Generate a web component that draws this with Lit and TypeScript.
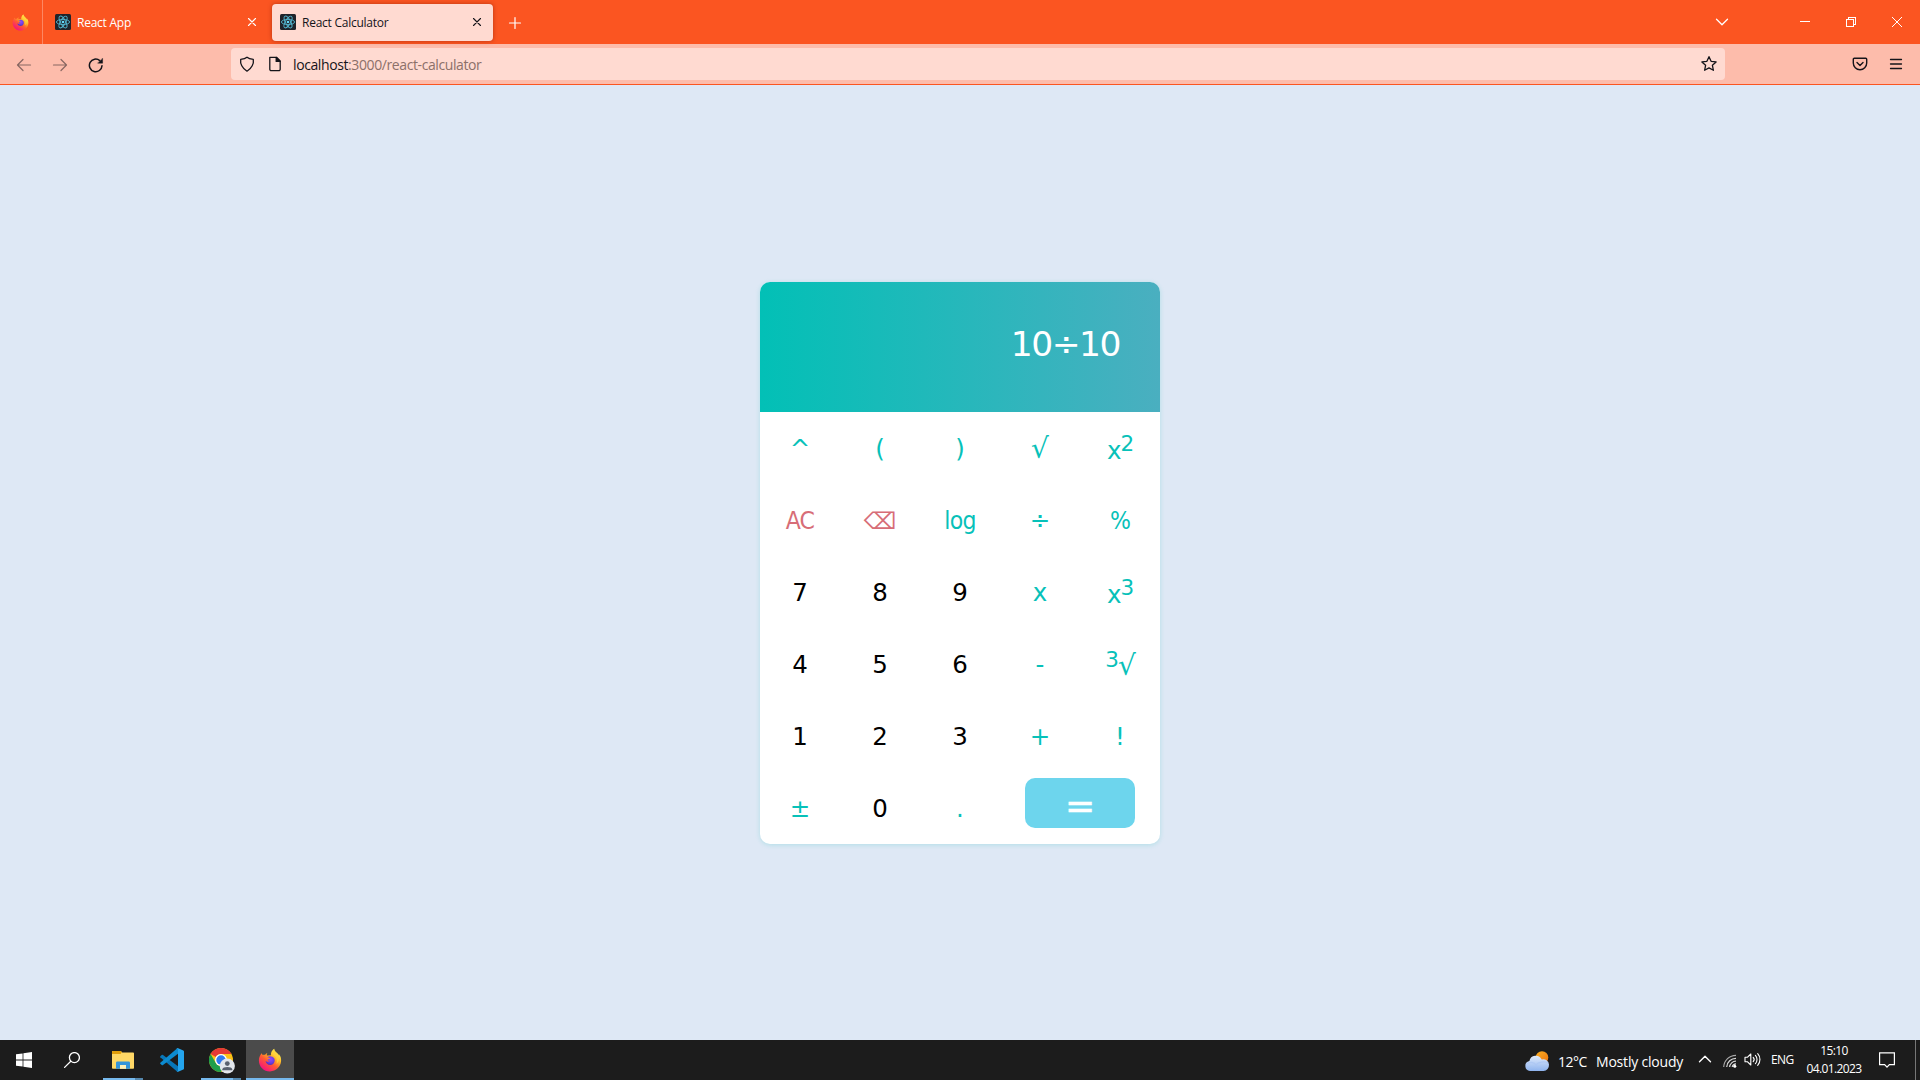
import { LitElement, html, svg, css } from "lit";
import { customElement, property } from "lit/decorators.js";
import { classMap } from "lit/directives/class-map.js";

const firefoxLogo = (id: string, size: number) => html`
  <svg width=${size} height=${size} viewBox="0 0 24 24">
    <defs>
      <linearGradient id="${id}-a" x1="0.85" y1="0.1" x2="0.25" y2="0.95">
        <stop offset="0.05" stop-color="#fff44f" />
        <stop offset="0.35" stop-color="#ffb025" />
        <stop offset="0.6" stop-color="#ff5a33" />
        <stop offset="1" stop-color="#f5127e" />
      </linearGradient>
      <radialGradient id="${id}-b" cx="0.55" cy="0.35" r="0.7">
        <stop offset="0" stop-color="#8c4bff" />
        <stop offset="0.6" stop-color="#6a3be0" />
        <stop offset="1" stop-color="#4b2fb0" />
      </radialGradient>
    </defs>
    <path fill="url(#${id}-a)" d="M2.4 6.9C3.1 5.8 3.9 5.3 3.9 5.3C4 6 4.3 6.6 4.7 7C5.3 6.7 6.4 6.6 7.1 6.8C7.9 5.6 9.3 5 9.3 5C8.8 5.8 8.7 6.7 8.9 7.5L13 7.2C12.6 4.6 14.1 1.9 16.2.7C16.2 3.6 19 4.3 20.4 6.6C20.8 6.9 21 7.5 21.1 8C21.2 7.2 21.1 6.7 21 6.3C22.6 8 23.3 10.6 23.1 13.1C22.7 19 18 23.4 12 23.4C5.700 23.4.9 18.500.9 12.400C.9 10.200 1.500 8.300 2.400 6.900Z" />
    <path fill="url(#${id}-b)" d="M9.300 9.200C11 7.500 14.800 7.900 16.200 10.300C17.600 13 15.900 16.900 12.600 17C9.800 17.100 7.700 15.200 7.600 13C8.900 14.100 10.800 14 12.300 12.800C11.500 12.900 10.200 12.600 9.600 11.900C10.200 11 11.600 11 12.100 10.600C11.600 9.700 10.300 9.600 9.300 9.200Z" />
    <path fill="#ffd23d" opacity=".75" d="M16.200.7C16.200 3.600 19 4.300 20.400 6.600C22 10 21 14 18.500 16C19.500 12 18.500 9 16 7.500C14 6.400 13.800 3 16.200.7Z" />
  </svg>`;

const reactLogo = html`
  <svg width="16" height="16" viewBox="0 0 16 16">
    <rect width="16" height="16" rx="1.500" fill="#20232a" />
    <g fill="none" stroke="#53b6cf" stroke-width=".9">
      <ellipse cx="8" cy="8" rx="6.600" ry="2.600" />
      <ellipse cx="8" cy="8" rx="6.600" ry="2.600" transform="rotate(60 8 8)" />
      <ellipse cx="8" cy="8" rx="6.600" ry="2.600" transform="rotate(120 8 8)" />
    </g>
    <circle cx="8" cy="8" r="1.300" fill="#61dafb" />
  </svg>`;

const line = (size: number, body: unknown, width = 1.2) => html`
  <svg width=${size} height=${size} viewBox="0 0 ${size} ${size}" fill="none" stroke="currentColor"
    stroke-width=${width} stroke-linecap="round" stroke-linejoin="round">${body}</svg>`;

const icons = {
  close: line(16, svg`<path d="M4.500 4.500l7 7M11.500 4.500l-7 7" />`, 1.1),
  plus: line(16, svg`<path d="M8 2.500v11M2.500 8h11" />`, 1.2),
  back: line(16, svg`<path d="M14.500 8H1.800M7 2.500L1.500 8L7 13.500" />`, 1.2),
  forward: line(16, svg`<path d="M1.500 8h12.700M9 2.500L14.500 8L9 13.500" />`, 1.2),
  reload: line(16, svg`<path d="M14 8.700A6.300 6.300 0 1 1 11.800 3.600" stroke-width="1.500" /><path d="M14.600 1.500v4.700H9.900z" fill="currentColor" stroke-width=".4" />`),
  shield: line(16, svg`<path d="M8 1.300C9.500 2.600 11.500 3.100 14.300 3.300C15 7.500 12.800 12.500 8 15.200C3.200 12.500 1 7.500 1.700 3.300C4.500 3.100 6.500 2.600 8 1.300Z" />`, 1.3),
  page: line(16, svg`<path d="M2.800 1.300h6.700l3.700 3.700v8.200a1.400 1.400 0 0 1-1.400 1.400H4.200A1.400 1.400 0 0 1 2.800 13.200z" /><path d="M9.200 1.500v3.900h3.900z" fill="currentColor" />`, 1.300),
  star: line(18, svg`<path d="M9 1.700l2.100 4.600 5 .6-3.700 3.400 1 5L9 12.900l-4.400 2.400 1-5L1.900 6.900l5-.6z" />`, 1.300),
  pocket: line(16, svg`<path d="M2.300 2.300h11.400a1 1 0 0 1 1 1v3.800a6.700 6.700 0 0 1-13.400 0V3.300a1 1 0 0 1 1-1z" /><path d="M5 6.500l3 3 3-3" />`, 1.400),
  menu: line(14, svg`<path d="M1.500 2.500h11M1.500 7h11M1.500 11.500h11" />`, 1.300),
  chevronDown: line(14, svg`<path d="M1.500 4.300l5.500 5.500 5.500-5.500" />`, 1.300),
  minimize: html`<svg width="10" height="10" shape-rendering="crispEdges"><rect y="4" width="10" height="1" fill="currentColor" /></svg>`,
  restore: html`<svg width="10" height="10" viewBox="0 0 10 10" fill="none" stroke="currentColor" shape-rendering="crispEdges"><path d="M.5 2.500h7v7h-7zM2.500 2.500v-2h7v7h-2" /></svg>`,
  closeWindow: html`<svg width="10" height="10" viewBox="0 0 10 10" stroke="currentColor"><path d="M0 0l10 10M10 0L0 10" /></svg>`,
  windows: html`<svg width="16" height="16" viewBox="0 0 16 16" fill="#fff"><path d="M0 2.300L6.600 1.400V7.600H0zM7.400 1.200L16 0V7.600H7.400zM0 8.400H6.600V14.600L0 13.700zM7.400 8.400H16V16L7.400 14.800z" /></svg>`,
  search: line(16, svg`<circle cx="10.400" cy="5.600" r="5" /><path d="M6.800 9.200L.6 15.400" />`, 1.300),
  explorer: html`<svg width="22" height="18" viewBox="0 0 22 18">
    <path d="M0 .8A.8.8 0 0 1 .8 0h8l1.500 1.600h10.900a.8.8 0 0 1 .8.800V17a.8.8 0 0 1-.8.800H.8A.8.8 0 0 1 0 17z" fill="#ffd866" />
    <path d="M0 .8A.8.8 0 0 1 .8 0h8l1 1.200L8.600 3H0z" fill="#e19e0b" />
    <path d="M4 17.800v-6a1.300 1.300 0 0 1 1.300-1.300h11.400a1.300 1.300 0 0 1 1.300 1.300v6h-4V14H8v3.800z" fill="#3595d9" />
    <path d="M8 14h6v3.800H8z" fill="#fff0b8" />
  </svg>`,
  vscode: html`<svg width="24" height="24" viewBox="0 0 24 24">
    <path d="M.3 8.300L2 6.800Q2.500 6.600 3 6.900L18 18.300V23.900L17 23.500L.3 9.200Q0 8.700.3 8.300z" fill="#0877b9" />
    <path d="M.3 15.700L2 17.200Q2.500 17.400 3 17.100L18 5.700V.1L17 .5L.3 14.800Q0 15.300.3 15.700z" fill="#0c8bd0" />
    <path d="M17.600.1L23.300 2.500Q24 2.900 24 3.600V20.400Q24 21.100 23.300 21.500L17.600 23.900Q16.700 24 16.500 23.500Q18 24 18 22.500V1.500Q18 0 16.500.5Q16.700 0 17.600.1z" fill="#24a5ee" />
  </svg>`,
  chrome: html`<svg width="26" height="26" viewBox="0 0 26 26">
    <circle cx="12" cy="12" r="12" fill="#fbc116" />
    <path d="M1.600 6A12 12 0 0 1 22.400 6H12A6 6 0 0 0 6.800 9z" fill="#e53935" />
    <path d="M1.600 6A12 12 0 0 0 12 24L17.200 15A6 6 0 0 1 6.800 15z" fill="#1e9e4a" />
    <circle cx="12" cy="12" r="6" fill="#fff" /><circle cx="12" cy="12" r="4.700" fill="#2f7bef" />
    <circle cx="18.300" cy="18" r="7.600" fill="#e2e6ec" />
    <circle cx="18.300" cy="15.600" r="2.400" fill="#59616e" />
    <path d="M13.400 22.300v-1c0-3 9.800-3 9.800 0v1z" fill="#59616e" />
  </svg>`,
  weather: html`<svg width="25" height="20" viewBox="0 0 25 20">
    <defs><linearGradient id="cloud" x1="0" y1="0" x2="0" y2="1"><stop offset="0" stop-color="#dfeafc" /><stop offset="1" stop-color="#8fb4ee" /></linearGradient>
    <linearGradient id="sun" x1="0" y1="0" x2="1" y2="1"><stop offset="0" stop-color="#fbb021" /><stop offset="1" stop-color="#ef7410" /></linearGradient></defs>
    <circle cx="17" cy="6.500" r="6.300" fill="url(#sun)" />
    <path d="M5 20a5 5 0 0 1-.6-9.900A6.500 6.500 0 0 1 16.700 8.600 5.600 5.600 0 0 1 24 13.500 6 6 0 0 1 18.500 20z" fill="url(#cloud)" />
    <path d="M1 13.500C5 10 9 11 11 14C13 11 19 10 23 12" fill="none" stroke="#a9c5f3" stroke-width="1.200" opacity=".7" />
  </svg>`,
  chevronUp: line(14, svg`<path d="M1.500 9.800L7 4.300l5.500 5.500" />`, 1.400),
  wifi: html`<svg width="14" height="14" viewBox="0 0 14 14" fill="none" stroke="#d8d8d8" stroke-width="1.200">
    <path d="M.7 13A12.300 12.300 0 0 1 13 1.300" opacity=".75" /><path d="M3.700 13A9.300 9.300 0 0 1 13 4.300" /><path d="M6.600 13A6.300 6.300 0 0 1 13 7.200" /><path d="M9.200 13A4 4 0 0 1 13 9.800" />
    <circle cx="11.800" cy="12.300" r="1.500" fill="#fff" stroke="none" /></svg>`,
  volume: line(17, svg`<path d="M1 6.300h2.300L6.800 3v11L3.300 10.700H1z" /><path d="M9.200 6.300a3.300 3.300 0 0 1 0 4.400M11.400 4.400a6 6 0 0 1 0 8.200M13.700 2.700a8.600 8.600 0 0 1 0 11.600" />`, 1.100),
  notify: html`<svg width="16" height="17" viewBox="0 0 16 17" fill="none" stroke="#fff" stroke-width="1.200"><path d="M.6.900h14.800v11.700h-5L8 15.200 5.600 12.600h-5z" /></svg>`,
};

@customElement("browser-tab")
class BrowserTab extends LitElement {
  @property() label = "";
  @property({ type: Boolean }) active = false;

  static styles = css`
    :host { display: block; width: 221px; height: 37px; }
    .tab { display: flex; align-items: center; height: 100%; box-sizing: border-box; padding: 0 8px; border-radius: 4px; color: #fff; }
    .active { background: #ffdad1; color: #15141a; box-shadow: 0 0 4px rgba(120, 20, 0, 0.5); }
    svg { display: block; }
    .label { flex: 1; margin-left: 6px; font-size: 12px; white-space: nowrap; letter-spacing: -0.25px; }
  `;

  render() {
    return html`<div class=${classMap({ tab: true, active: this.active })}>
      ${reactLogo}<span class="label">${this.label}</span>${icons.close}
    </div>`;
  }
}

@customElement("browser-chrome")
class BrowserChrome extends LitElement {
  static styles = css`
    :host { display: block; font-family: "Open Sans", "Noto Sans", sans-serif; }
    svg { display: block; }
    .tabs { display: flex; align-items: center; height: 44px; background: #fb5521; color: #fff; }
    .home { display: flex; align-items: center; justify-content: center; width: 43px; height: 44px; box-sizing: border-box; padding-right: 2px; border-right: 1px solid #fd8763; }
    .first { margin-left: 4px; }
    .second { margin-left: 4px; }
    .plus { margin-left: 14px; padding-top: 1px; }
    .controls { display: flex; align-items: center; margin-left: auto; padding-right: 18px; }
    .list { margin-right: 71px; }
    .controls .gap { margin-right: 36px; }
    .bar { display: flex; align-items: center; height: 40px; background: #fdbcab; border-bottom: 1px solid #fb5521; color: #15141a; }
    .nav { display: flex; gap: 20px; width: 231px; box-sizing: border-box; padding: 1px 0 0 16px; }
    .muted { opacity: 0.5; }
    .address { display: flex; align-items: center; width: 1494px; height: 32px; box-sizing: border-box; padding: 0 7px 0 8px; border-radius: 4px; background: #ffdad1; }
    .page { margin-left: 12px; }
    .url { flex: 1; margin-left: 10px; font-size: 14px; letter-spacing: -0.4px; color: #8c7069; }
    .host { color: #15141a; }
    .tools { display: flex; align-items: center; gap: 21px; margin-left: auto; padding-right: 17px; }
  `;

  render() {
    return html`
      <div class="tabs">
        <div class="home">${firefoxLogo("home", 17)}</div>
        <browser-tab class="first" label="React App"></browser-tab>
        <browser-tab class="second" label="React Calculator" active></browser-tab>
        <span class="plus">${icons.plus}</span>
        <div class="controls">
          <span class="list">${icons.chevronDown}</span>
          <span class="gap">${icons.minimize}</span>
          <span class="gap">${icons.restore}</span>
          ${icons.closeWindow}
        </div>
      </div>
      <div class="bar">
        <div class="nav">
          <span class="muted">${icons.back}</span><span class="muted">${icons.forward}</span>${icons.reload}
        </div>
        <div class="address">
          ${icons.shield}<span class="page">${icons.page}</span>
          <span class="url"><span class="host">localhost</span>:3000/react-calculator</span>
          ${icons.star}
        </div>
        <div class="tools">${icons.pocket}${icons.menu}</div>
      </div>`;
  }
}

type Key = { label: unknown; kind?: "num" | "danger" | "script" | "cube" | "erase" | "word" | "root" };
const num = (label: string): Key => ({ label, kind: "num" });

const keys: Key[] = [
  { label: "^" }, { label: "(" }, { label: ")" }, { label: "√", kind: "root" }, { label: html`x<sup>2</sup>`, kind: "script" },
  { label: "AC", kind: "danger" }, { label: "⌫", kind: "erase" }, { label: "log", kind: "word" }, { label: "÷" }, { label: "%", kind: "word" },
  num("7"), num("8"), num("9"), { label: "x" }, { label: html`x<sup>3</sup>`, kind: "script" },
  num("4"), num("5"), num("6"), { label: "-" }, { label: html`<sup>3</sup><span class="big">√</span>`, kind: "cube" },
  num("1"), num("2"), num("3"), { label: "+" }, { label: "!" },
  { label: "±" }, num("0"), { label: "." },
];

@customElement("react-calculator")
class Calculator extends LitElement {
  static styles = css`
    :host { display: block; width: 400px; border-radius: 10px; overflow: hidden; background: #fff; box-shadow: 0 1px 5px rgba(2, 192, 182, 0.2); font-family: "DejaVu Sans", sans-serif; }
    .display { height: 130px; box-sizing: border-box; padding: 38px 40px 0 0; background: linear-gradient(90deg, #02c0b6, #4aafc0); color: #fff; font-size: 34.5px; line-height: 48px; letter-spacing: -1.5px; text-align: right; }
    .keys { display: grid; grid-template-columns: repeat(5, 80px); grid-auto-rows: 72px; }
    .key { display: flex; align-items: center; justify-content: center; border: 0; padding: 2px 0 0; background: none; font: inherit; font-size: 24.5px; line-height: 28px; color: #07c1b9; }
    .num { color: #000; }
    .danger, .erase { color: #d76d77; }
    .danger, .word { font-family: "DejaVu Sans Condensed", "DejaVu Sans", sans-serif; font-stretch: condensed; letter-spacing: -0.7px; }
    .erase { font-size: 23px; padding-top: 3px; }
    .script, .cube { padding-top: 6px; letter-spacing: -1px; }
    sup { font-size: 21.5px; line-height: 0; vertical-align: 8px; }
    .root, .big { font-size: 28px; line-height: 28px; }
    .line { white-space: nowrap; }
    .equals { grid-column: span 2; justify-self: center; width: 110px; height: 50px; margin-top: 6px; border: 0; border-radius: 10px; padding: 6px 0 0; background: #6dd5ed; color: #fff; font: inherit; font-size: 36px; line-height: 40px; -webkit-text-stroke: 0.6px #fff; }
  `;

  render() {
    return html`
      <div class="display">10÷10</div>
      <div class="keys">
        ${keys.map((k) => html`<button class="key ${k.kind ?? ""}"><span class="line">${k.label}</span></button>`)}
        <button class="equals">=</button>
      </div>`;
  }
}

@customElement("task-bar")
class TaskBar extends LitElement {
  static styles = css`
    :host { display: flex; align-items: center; height: 40px; background: #1c1c1c; color: #fff; font-family: "Open Sans", "Noto Sans", sans-serif; }
    svg { display: block; }
    .app { display: flex; align-items: center; justify-content: center; height: 40px; box-sizing: border-box; width: 49px; }
    .start { width: 48px; }
    .find { width: 48px; }
    .open { border-bottom: 2px solid #76b9ed; padding-top: 1px; width: 48px; }
    .multi { width: 40px; border-image: linear-gradient(90deg, #76b9ed 78%, #5588ae 78%) 2; }
    .explorer { margin-left: 7px; padding-top: 2px; }
    .code { width: 48px; margin: 0 5px; }
    .chrome { padding: 3px 0 0 2px; }
    .current { margin-left: 5px; background: #4b4b4b; }
    .tray { display: flex; align-items: center; margin-left: auto; height: 40px; }
    .weather { display: flex; align-items: center; gap: 8px; font-size: 14px; padding-top: 2px; }
    .temp { width: 30px; letter-spacing: -0.5px; white-space: nowrap; }
    .sky { width: 87px; letter-spacing: -0.2px; white-space: nowrap; }
    .up { margin-left: 15px; margin-top: -2px; }
    .wifi { margin-left: 11px; padding-top: 1px; }
    .volume { margin-left: 7px; margin-top: -1px; }
    .lang { margin-left: 10px; margin-top: -1px; width: 25px; font-size: 12px; letter-spacing: -0.6px; }
    .clock { margin-left: 8px; width: 60px; font-size: 12px; line-height: 18px; letter-spacing: -0.6px; text-align: center; white-space: nowrap; }
    .notify { margin: 0 20px 0 15px; }
    .edge { width: 5px; height: 40px; box-sizing: border-box; border-left: 1px solid #777; }
  `;

  render() {
    return html`
      <div class="app start">${icons.windows}</div>
      <div class="app find">${icons.search}</div>
      <div class="app open multi explorer">${icons.explorer}</div>
      <div class="app code">${icons.vscode}</div>
      <div class="app open multi chrome">${icons.chrome}</div>
      <div class="app open current">${firefoxLogo("task", 24)}</div>
      <div class="tray">
        <div class="weather">${icons.weather}<span class="temp">12°C</span><span class="sky">Mostly cloudy</span></div>
        <span class="up">${icons.chevronUp}</span>
        <span class="wifi">${icons.wifi}</span>
        <span class="volume">${icons.volume}</span>
        <span class="lang">ENG</span>
        <div class="clock"><div>15:10</div><div>04.01.2023</div></div>
        <span class="notify">${icons.notify}</span>
        <span class="edge"></span>
      </div>`;
  }
}

@customElement("app-root")
class AppRoot extends LitElement {
  static styles = css`
    :host { display: flex; flex-direction: column; width: 1920px; height: 1080px; overflow: hidden; background: #dee8f5; }
    .page { flex: 1; display: flex; align-items: center; justify-content: center; }
  `;

  render() {
    return html`
      <browser-chrome></browser-chrome>
      <main class="page"><react-calculator></react-calculator></main>
      <task-bar></task-bar>`;
  }
}
